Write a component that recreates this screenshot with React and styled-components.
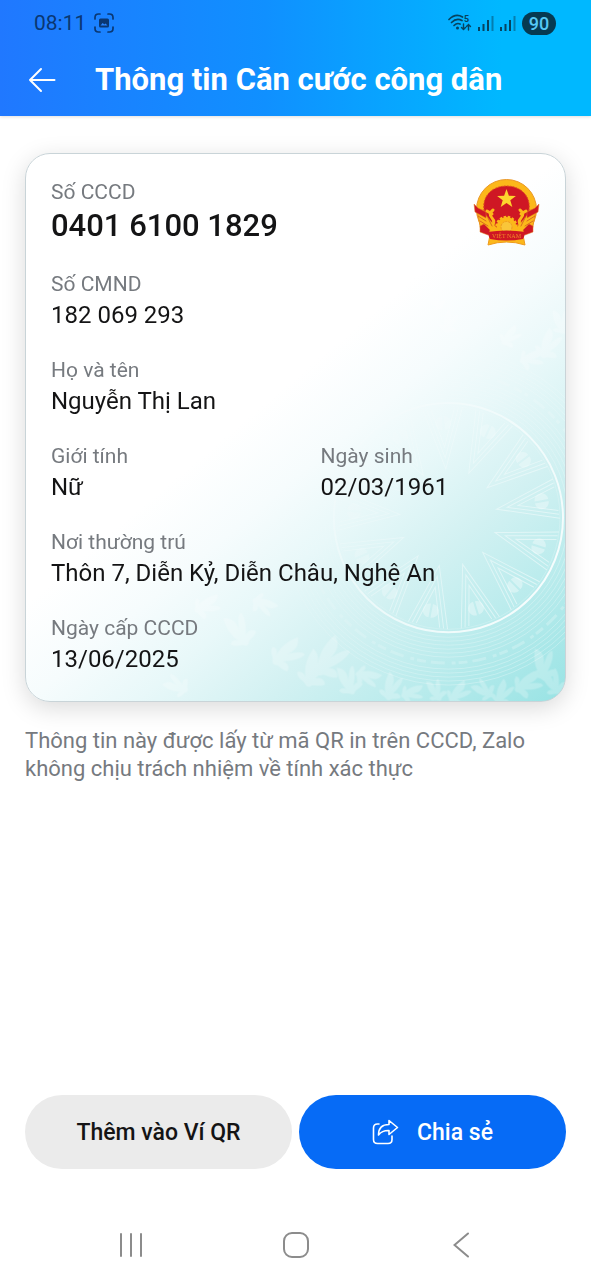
import styled, { createGlobalStyle } from "styled-components";

const GlobalStyle = createGlobalStyle`
  * {
    box-sizing: border-box;
  }

  body {
    margin: 0;
    background-color: #ffffff;
    font-family: Roboto, "Noto Sans", sans-serif;
    color: #141415;
  }
`;

const Screen = styled.div`
  min-height: 100vh;
  display: flex;
  flex-direction: column;
`;

const Header = styled.header`
  background: linear-gradient(90deg, #2078ff, #1090ff 45%, #00b8ff 85%);
  box-shadow: 0 1px 3px #00000020;
`;

const StatusBar = styled.div`
  height: 44px;
  padding: 2px 35px 0 34px;
  display: flex;
  align-items: center;
  justify-content: space-between;
  color: #0a3772;
`;

const StatusGroup = styled.div`
  display: flex;
  align-items: center;
  gap: ${({ $gap }) => $gap}px;
`;

const Clock = styled.span`
  font-size: 21px;
  line-height: 24px;
`;

const Battery = styled.span`
  width: 34px;
  height: 23px;
  border-radius: 12px;
  background-color: #063a52;
  color: #55c8f5;
  font-size: 18px;
  font-weight: 500;
  line-height: 24px;
  text-align: center;
`;

const TitleBar = styled.div`
  height: 72px;
  padding: 0 24px;
  display: flex;
  align-items: center;
  gap: 35px;
`;

const IconButton = styled.button`
  width: 36px;
  height: 36px;
  padding: 0;
  border: none;
  background: none;
  display: flex;
  align-items: center;
  justify-content: center;
  cursor: pointer;
`;

const Title = styled.h1`
  margin: 0;
  color: white;
  font-size: 31px;
  line-height: 36px;
  font-weight: 700;
`;

const Content = styled.main`
  flex: 1;
  padding: 37px 25px 24px;
`;

const Card = styled.section`
  position: relative;
  overflow: hidden;
  border: 1px solid #c9d4d8;
  border-radius: 25px;
  padding: 24px 25px 25px;
  background: linear-gradient(
    140deg,
    #ffffff 45%,
    #f6fcfd 55%,
    #e8f8f9 64%,
    #d2f1f2 75%,
    #b8ebec 87%,
    #98e3e4
  );
`;

const CardShadow = styled.div`
  border-radius: 25px;
  box-shadow: 0 6px 24px #00000026;
`;

const Pattern = styled.svg`
  position: absolute;
  inset: 0;
  width: 100%;
  height: 100%;
`;

const Fields = styled.dl`
  position: relative;
  margin: 0;
  display: flex;
  flex-direction: column;
  gap: 24px;
`;

const TopRow = styled.div`
  display: flex;
  justify-content: space-between;
`;

const SplitRow = styled.div`
  display: grid;
  grid-template-columns: 1fr 1fr;
  column-gap: 50px;
`;

const Label = styled.dt`
  color: #767a7f;
  font-size: 21px;
  line-height: 28px;
`;

const Value = styled.dd`
  margin: 0;
  font-size: ${({ $large }) => ($large ? "31px" : "24px")};
  line-height: ${({ $large }) => ($large ? "40px" : "34px")};
  font-weight: ${({ $large }) => ($large ? 500 : 400)};
`;

const Note = styled.p`
  margin: 25px 0 0;
  color: #767a7f;
  font-size: 22px;
  line-height: 28px;
`;

const Actions = styled.div`
  display: grid;
  grid-template-columns: 1fr 1fr;
  gap: 7px;
  padding: 0 25px 41px;
`;

const ActionButton = styled.button`
  height: 74px;
  border: none;
  border-radius: 37px;
  display: flex;
  align-items: center;
  justify-content: center;
  gap: 18px;
  background-color: ${({ $primary }) => ($primary ? "#066bf6" : "#ebebeb")};
  color: ${({ $primary }) => ($primary ? "#ffffff" : "#141415")};
  font-family: inherit;
  font-size: 23px;
  font-weight: 500;
  cursor: pointer;
`;

const SystemNav = styled.nav`
  height: 70px;
  padding: 0 48px;
  display: grid;
  grid-template-columns: repeat(3, 1fr);
  align-items: center;
  justify-items: center;
`;

const Field = ({ label, value, large }) => (
  <div>
    <Label>{label}</Label>
    <Value $large={large}>{value}</Value>
  </div>
);

const CaptureIcon = () => (
  <svg width="20" height="20" viewBox="0 0 20 20" fill="none" aria-hidden="true">
    <path
      d="M1 6V4.500Q1 1 4.500 1H6M14 1h1.500Q19 1 19 4.500V6M19 14v1.500Q19 19 15.500 19H14M6 19H4.500Q1 19 1 15.500V14"
      stroke="currentColor"
      strokeWidth="1.700"
      strokeLinecap="round"
    />
    <rect x="5" y="5.500" width="10" height="9" rx="1.500" fill="currentColor" />
    <path d="M6.500 12.500l2.200-2.500 1.600 1.500 1.200-1 2 2z" fill="#2a86ff" />
  </svg>
);

const WifiIcon = () => (
  <svg width="24" height="18" viewBox="0 0 24 18" fill="none" aria-hidden="true">
    <g stroke="#07435f" strokeWidth="1.700" strokeLinecap="round">
      <path d="M1 5.500Q7.500-1 14.500 3" />
      <path d="M3.500 8.500Q8.500 3.500 14 6.500" />
      <path d="M6 11.500Q9 8.500 12 10" />
      <path d="M15.500 10v5.500m-2-2l2 2 2-2M20.500 16v-5.500m-2 2l2-2 2 2" strokeWidth="1.400" />
    </g>
    <circle cx="9.500" cy="14" r="1.500" fill="#07435f" />
    <text x="16" y="8" fontSize="9" fontWeight="700" fill="#07435f">
      5
    </text>
  </svg>
);

const SignalIcon = () => (
  <svg width="16" height="16" viewBox="0 0 16 16" fill="#07435f" aria-hidden="true">
    <rect x="0" y="12" width="2" height="4" />
    <rect x="4.500" y="9" width="2" height="7" />
    <rect x="9" y="5" width="2" height="11" />
    <rect x="13.500" y="1" width="2" height="15" opacity="0.500" />
  </svg>
);

const ArrowLeftIcon = () => (
  <svg width="28" height="28" viewBox="0 0 28 28" fill="none" aria-hidden="true">
    <path
      d="M26.500 14H2M13 3L2 14l11 11"
      stroke="white"
      strokeWidth="2"
      strokeLinecap="round"
      strokeLinejoin="round"
    />
  </svg>
);

const ShareIcon = () => (
  <svg width="27" height="27" viewBox="0 0 27 27" fill="none" aria-hidden="true">
    <g stroke="white" strokeWidth="1.600" strokeLinejoin="round" strokeLinecap="round">
      <path d="M7 5H5.500Q1.500 5 1.500 9v11.500Q1.500 24.500 5.500 24.500H16Q20 24.500 20 20.500V17" />
      <path d="M17 1.500L25.500 8.500 17 15.500V11.500C12 11.300 9 12.800 6.500 16 6.500 9 10.500 5.500 17 5.500z" />
    </g>
  </svg>
);

const RAY_COUNT = 13;
const rays = Array.from(
  { length: RAY_COUNT },
  (_, i) => -10 + (i * 360) / RAY_COUNT
);

// x, y, angle, scale
const sprigs = [
  [150, 534, -70, 1.1],
  [182, 452, 60, 1.2],
  [212, 478, -35, 1.5],
  [240, 452, 110, 1.1],
  [262, 500, 50, 1.5],
  [288, 516, 15, 1.6],
  [304, 504, 30, 1.8],
  [322, 528, -25, 1.3],
  [344, 524, 100, 1.1],
  [366, 534, 10, 1.2],
  [388, 540, 70, 1],
  [410, 538, -30, 1],
  [434, 540, 40, 1.1],
  [458, 538, -60, 1],
  [478, 540, 20, 1.1],
  [504, 530, 55, 1.3],
  [518, 512, -10, 1.4],
  [528, 530, -35, 1.2],
  [524, 190, 20, 1.3],
  [508, 204, 70, 1.1],
  [536, 168, -20, 1.1],
  [486, 182, 40, 1],
  [424, 168, 10, 1],
  [410, 148, -50, 0.9],
];

const CardPattern = () => (
  <Pattern viewBox="0 0 541 549" preserveAspectRatio="xMaxYMax slice" aria-hidden="true">
    <defs>
      <linearGradient id="fade" x1="0" y1="0" x2="1" y2="1">
        <stop offset="0.350" stopColor="white" stopOpacity="0.080" />
        <stop offset="0.600" stopColor="white" stopOpacity="0.600" />
        <stop offset="0.850" stopColor="white" stopOpacity="0.900" />
      </linearGradient>
      <mask id="drumMask" maskUnits="userSpaceOnUse" x="220" y="150" width="321" height="399">
        <rect x="220" y="150" width="321" height="399" fill="url(#fade)" />
      </mask>
    </defs>
    <g mask="url(#drumMask)" fill="none" stroke="white">
      <circle cx="424" cy="365" r="115" strokeWidth="2" />
      <circle cx="424" cy="365" r="112" strokeWidth="0.500" opacity="0.500" />
      {[120, 124, 128, 132, 136, 140, 152, 156, 160, 164, 168].map((r) => (
        <circle key={r} cx="424" cy="365" r={r} strokeWidth="0.700" opacity="0.450" />
      ))}
      <circle
        cx="424"
        cy="365"
        r="146"
        strokeWidth="3"
        strokeDasharray="9 3 4 7 14 5"
        opacity="0.250"
      />
      {rays.map((angle) => (
        <g key={angle} transform={`translate(424 365) rotate(${angle})`}>
          <path
            d="M110-20L49 0 110 20M110-16L60 0l50 16M110-12L71 0l39 12"
            strokeWidth="1"
            opacity="0.600"
          />
          <path
            d="M102-1a7 7 0 0 0-14 0zM102 1a7 7 0 0 1-14 0z"
            fill="white"
            stroke="none"
            opacity="0.450"
          />
        </g>
      ))}
    </g>
    <g fill="white" opacity="0.240">
      {sprigs.map(([x, y, angle, scale]) => (
        <path
          key={`${x}-${y}`}
          transform={`translate(${x} ${y}) rotate(${angle}) scale(${scale})`}
          d="M-1 12C-4 8-7 10-9 5-6 3-4 5-3 7-5 2-6-3-3-12 2-9 3-5 1 1 3-3 6-9 9-8 9-2 5 3 3 6 6 4 9 5 10 8 6 11 3 9 1 12z"
        />
      ))}
    </g>
  </Pattern>
);

const Emblem = () => (
  <svg width="67" height="68" viewBox="0 0 67 68" role="img" aria-label="Quốc huy Việt Nam">
    <circle cx="33.500" cy="31.500" r="30" fill="#fcb81a" stroke="#e9982a" />
    <path
      d="M4 32L8 53Q20 59 33.500 59T59 53L63 32z"
      fill="#fcb81a"
      stroke="#e99320"
      strokeLinejoin="round"
    />
    <path
      d="M12 36C7 20 18 8 33.500 8S60 20 55 36L50 42 43 50H24L17 42z"
      fill="#cf1724"
      stroke="#dc4a20"
      strokeDasharray="2 1"
    />
    <path
      d="M33.500 11l2.400 6.800 7 .2-5.600 4.200 2 6.800-5.800-4-5.800 4 2-6.800-5.600-4.200 7-.2z"
      fill="#fdd52e"
    />
    <g fill="#cf1724" stroke="#e27a1d" strokeWidth="0.500">
      <path d="M1 26l4 4 8 4v6L2 34zM66 26l-4 4-8 4v6l11-6z" />
      <path d="M7 48l4-2 6 6-2 5-8-3zM60 48l-4-2-6 6 2 5 8-3z" />
    </g>
    <g fill="none" strokeLinecap="round">
      <path
        d="M20 32q-5 4-1 8t-1 10M47 32q5 4 1 8t1 10M14 33l5 3M53 33l-5 3"
        stroke="#fcb81a"
        strokeWidth="3"
      />
      <path
        d="M5 38l8 5M7 43l8 5M15 40l4 8M62 38l-8 5M60 43l-8 5M52 40l-4 8"
        stroke="#d96a20"
        strokeWidth="1"
      />
    </g>
    <circle
      cx="33.500"
      cy="49"
      r="10"
      fill="#fcb81a"
      stroke="#fcb81a"
      strokeWidth="2.500"
      strokeDasharray="2.500 1.500"
    />
    <circle cx="33.500" cy="49" r="5.500" fill="#f9c63a" stroke="#ed9a23" strokeDasharray="2 1" />
    <path d="M17 57L15 67Q33.500 61 52 67L50 57z" fill="#fcb81a" stroke="#ee9a1c" />
    <path d="M14 54Q33.500 51 53 54L50 61Q33.500 64 17 61z" fill="#cf1724" />
    <text
      x="33.500"
      y="60"
      textAnchor="middle"
      fontFamily="Liberation Serif, serif"
      fontSize="6"
      fill="#f18a25"
    >
      VIỆT NAM
    </text>
  </svg>
);

const App = () => {
  return (
    <Screen>
      <GlobalStyle />
      <Header>
        <StatusBar>
          <StatusGroup $gap={8}>
            <Clock>08:11</Clock>
            <CaptureIcon />
          </StatusGroup>
          <StatusGroup $gap={6}>
            <WifiIcon />
            <SignalIcon />
            <SignalIcon />
            <Battery>90</Battery>
          </StatusGroup>
        </StatusBar>
        <TitleBar>
          <IconButton type="button" aria-label="Quay lại">
            <ArrowLeftIcon />
          </IconButton>
          <Title>Thông tin Căn cước công dân</Title>
        </TitleBar>
      </Header>

      <Content>
        <CardShadow>
          <Card>
            <CardPattern />
            <Fields>
              <TopRow>
                <Field label="Số CCCD" value="0401 6100 1829" large />
                <Emblem />
              </TopRow>
              <Field label="Số CMND" value="182 069 293" />
              <Field label="Họ và tên" value="Nguyễn Thị Lan" />
              <SplitRow>
                <Field label="Giới tính" value="Nữ" />
                <Field label="Ngày sinh" value="02/03/1961" />
              </SplitRow>
              <Field
                label="Nơi thường trú"
                value="Thôn 7, Diễn Kỷ, Diễn Châu, Nghệ An"
              />
              <Field label="Ngày cấp CCCD" value="13/06/2025" />
            </Fields>
          </Card>
        </CardShadow>
        <Note>
          Thông tin này được lấy từ mã QR in trên CCCD, Zalo không chịu trách
          nhiệm về tính xác thực
        </Note>
      </Content>

      <Actions>
        <ActionButton type="button">Thêm vào Ví QR</ActionButton>
        <ActionButton type="button" $primary>
          <ShareIcon />
          Chia sẻ
        </ActionButton>
      </Actions>

      <SystemNav>
        <IconButton type="button" aria-label="Ứng dụng gần đây">
          <svg width="24" height="24" viewBox="0 0 24 24" stroke="#8c8c8c" strokeWidth="2" strokeLinecap="round">
            <path d="M2 1v22M12 1v22M22 1v22" />
          </svg>
        </IconButton>
        <IconButton type="button" aria-label="Màn hình chính">
          <svg width="26" height="26" viewBox="0 0 26 26" fill="none" stroke="#8c8c8c" strokeWidth="2">
            <rect x="1" y="1" width="24" height="24" rx="8" />
          </svg>
        </IconButton>
        <IconButton type="button" aria-label="Trở về">
          <svg width="16" height="26" viewBox="0 0 16 26" fill="none" stroke="#8c8c8c" strokeWidth="2" strokeLinecap="round">
            <path d="M15 1.500L1.500 13 15 24.500" />
          </svg>
        </IconButton>
      </SystemNav>
    </Screen>
  );
};

export default App;
